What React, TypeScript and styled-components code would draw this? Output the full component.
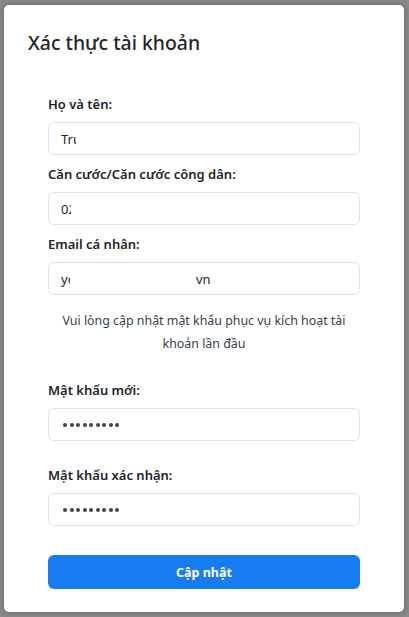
import React from "react";
import styled, { createGlobalStyle } from "styled-components";

const Global = createGlobalStyle`
  html, body { margin: 0; padding: 0; }
  body {
    background: #898989;
    font-family: "Noto Sans", "Open Sans", sans-serif;
    width: 409px;
    height: 617px;
    overflow: hidden;
  }
`;

const Backdrop = styled.div`
  width: 409px;
  height: 617px;
  padding: 5px 5px 5px 4px;
  box-sizing: border-box;
`;

const Modal = styled.div`
  width: 400px;
  height: 607px;
  box-sizing: border-box;
  background: #fff;
  border-radius: 5px;
  box-shadow: 0 0 6px rgba(0, 0, 0, 0.25);
  padding: 26px 44px 0 44px;
  display: flex;
  flex-direction: column;
`;

const Title = styled.h2`
  margin: 0 0 39px -20px;
  font-size: 19.4px;
  line-height: 24px;
  font-weight: 500;
  color: #212529;
`;

const Label = styled.div<{ $top?: number }>`
  margin-top: ${(p) => p.$top ?? 0}px;
  margin-bottom: 8px;
  font-size: 13px;
  line-height: 20px;
  font-weight: 600;
  color: #212529;
`;

const Field = styled.div`
  position: relative;
  height: 33px;
  box-sizing: border-box;
  border: 1px solid #dee2e6;
  border-radius: 6px;
  padding: 0 11px 0 12px;
  display: flex;
  align-items: center;
  font-size: 13px;
  color: #212529;
  overflow: hidden;
  white-space: nowrap;
`;

const Lead = styled.span<{ $w: number }>`
  display: inline-block;
  width: ${(p) => p.$w}px;
  flex: none;
`;

const Mask = styled.span`
  position: absolute;
  top: 1px;
  bottom: 1px;
  background: #fff;
`;

const Dots = styled.span`
  display: flex;
  gap: 2.5px;
  padding-left: 2px;
`;

const Dot = styled.span`
  width: 4px;
  height: 4px;
  border-radius: 50%;
  background: #444;
`;

const Note = styled.p`
  margin: 14px 0 0;
  text-align: center;
  font-size: 12.4px;
  line-height: 23px;
  color: #36424f;
`;

const Button = styled.button`
  margin-top: 29px;
  height: 34px;
  border: none;
  border-radius: 6px;
  background: #177cf0;
  color: #fff;
  font-family: inherit;
  font-size: 12.5px;
  font-weight: 700;
  padding: 0;
`;

const Password = () => (
  <Field>
    <Dots>
      {Array.from({ length: 9 }).map((_, i) => (
        <Dot key={i} />
      ))}
    </Dots>
  </Field>
);

export default function App() {
  return (
    <>
      <Global />
      <Backdrop>
        <Modal>
          <Title>Xác thực tài khoản</Title>
          <Label>Họ và tên:</Label>
          <Field>
            Trương Văn An
            <Mask style={{ left: 27, right: 0 }} />
          </Field>
          <Label $top={9}>Căn cước/Căn cước công dân:</Label>
          <Field>
            024187000123
            <Mask style={{ left: 22, right: 0 }} />
          </Field>
          <Label $top={9}>Email cá nhân:</Label>
          <Field>
            <Lead $w={135}>yo</Lead>vn
            <Mask style={{ left: 21, width: 125 }} />
          </Field>
          <Note>
            Vui lòng cập nhật mật khẩu phục vụ kích hoạt tài khoản lần đầu
          </Note>
          <Label $top={25}>Mật khẩu mới:</Label>
          <Password />
          <Label $top={24}>Mật khẩu xác nhận:</Label>
          <Password />
          <Button>Cập nhật</Button>
        </Modal>
      </Backdrop>
    </>
  );
}
